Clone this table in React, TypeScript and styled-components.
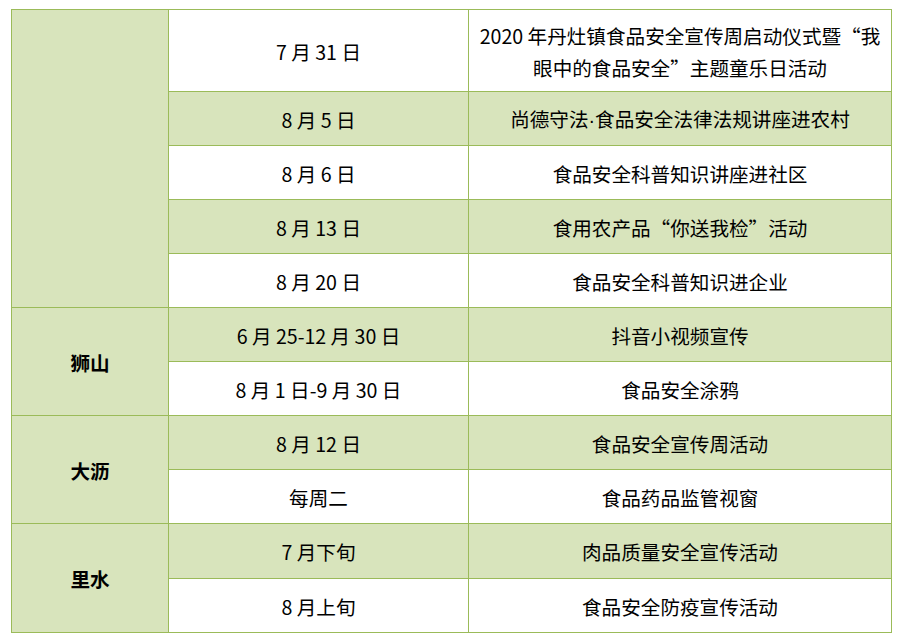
import React from "react";
import styled, { createGlobalStyle } from "styled-components";

const GlobalStyle = createGlobalStyle`
  html, body {
    margin: 0;
    padding: 0;
    background: #ffffff;
  }
  body {
    font-family: "Noto Sans CJK SC", "Noto Sans", sans-serif;
    color: #000000;
  }
`;

const Page = styled.div`
  padding: 9px 0 0 11px;
`;

const Table = styled.table`
  border-collapse: collapse;
  table-layout: fixed;
  width: 880px;
  font-size: 19.6px;
  line-height: 32px;
`;

const Row = styled.tr<{ $h: number }>`
  height: ${(p) => p.$h}px;
`;

const Cell = styled.td<{ $green?: boolean; $bold?: boolean }>`
  border: 1px solid #9bbb59;
  background: ${(p) => (p.$green ? "#d8e4bc" : "#ffffff")};
  font-weight: ${(p) => (p.$bold ? 700 : 400)};
  text-align: center;
  vertical-align: middle;
  padding: 2px 8px 0;
  white-space: nowrap;
`;

const Dot = styled.span`
  font-family: "Liberation Sans", sans-serif;
`;

type Item = { date: string; text: React.ReactNode; h?: number };
type Group = { place: string; items: Item[] };

const groups: Group[] = [
  {
    place: "",
    items: [
      {
        date: "7 月 31 日",
        text: (
          <>
            2020 年丹灶镇食品安全宣传周启动仪式暨“我
            <br />
            眼中的食品安全”主题童乐日活动
          </>
        ),
        h: 82,
      },
      {
        date: "8 月 5 日",
        text: (
          <>
            尚德守法<Dot>·</Dot>食品安全法律法规讲座进农村
          </>
        ),
      },
      { date: "8 月 6 日", text: "食品安全科普知识讲座进社区" },
      { date: "8 月 13 日", text: "食用农产品“你送我检”活动" },
      { date: "8 月 20 日", text: "食品安全科普知识进企业" },
    ],
  },
  {
    place: "狮山",
    items: [
      { date: "6 月 25-12 月 30 日", text: "抖音小视频宣传" },
      { date: "8 月 1 日-9 月 30 日", text: "食品安全涂鸦" },
    ],
  },
  {
    place: "大沥",
    items: [
      { date: "8 月 12 日", text: "食品安全宣传周活动" },
      { date: "每周二", text: "食品药品监管视窗" },
    ],
  },
  {
    place: "里水",
    items: [
      { date: "7 月下旬", text: "肉品质量安全宣传活动", h: 55 },
      { date: "8 月上旬", text: "食品安全防疫宣传活动" },
    ],
  },
];

export default function App() {
  return (
    <Page>
      <GlobalStyle />
      <Table>
        <colgroup>
          <col style={{ width: 157 }} />
          <col style={{ width: 300 }} />
          <col style={{ width: 423 }} />
        </colgroup>
        <tbody>
          {groups.map((g) =>
            g.items.map((it, i) => {
              const green = g.place === "" ? i % 2 === 1 : i % 2 === 0;
              return (
                <Row key={g.place + i} $h={it.h ?? 54}>
                  {i === 0 && (
                    <Cell $green $bold rowSpan={g.items.length}>
                      {g.place}
                    </Cell>
                  )}
                  <Cell $green={green}>{it.date}</Cell>
                  <Cell $green={green}>{it.text}</Cell>
                </Row>
              );
            })
          )}
        </tbody>
      </Table>
    </Page>
  );
}
